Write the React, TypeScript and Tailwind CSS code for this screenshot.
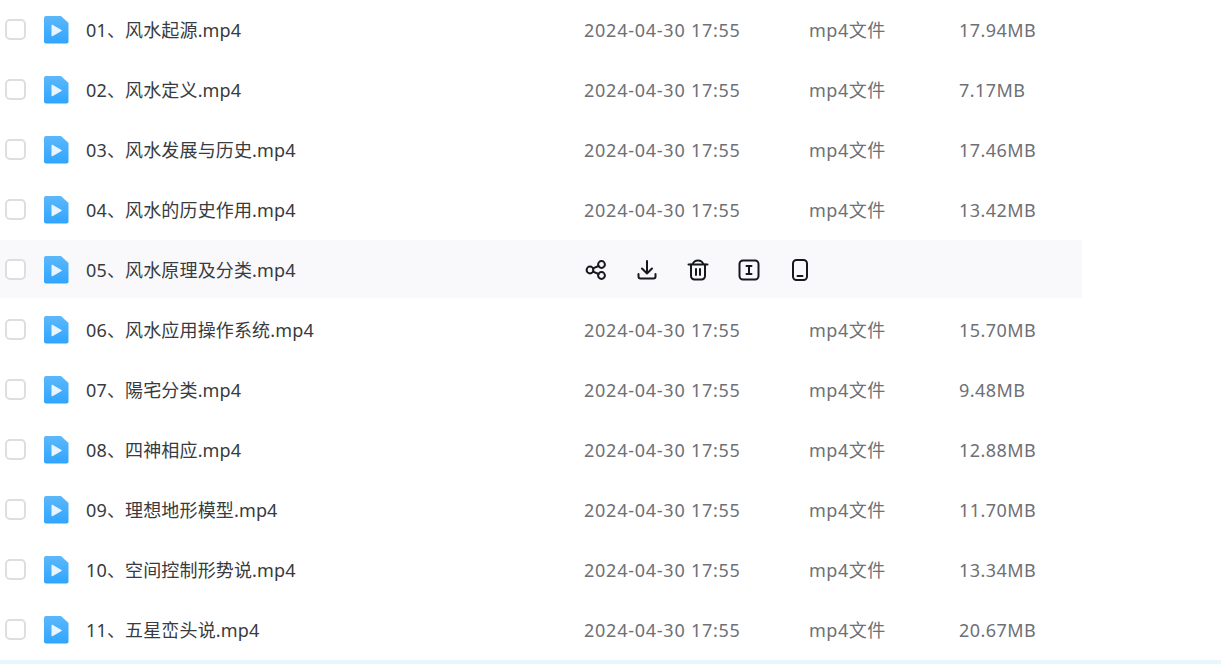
const files = [
  { name: '01、风水起源.mp4', size: '17.94MB' },
  { name: '02、风水定义.mp4', size: '7.17MB' },
  { name: '03、风水发展与历史.mp4', size: '17.46MB' },
  { name: '04、风水的历史作用.mp4', size: '13.42MB' },
  { name: '05、风水原理及分类.mp4', size: '', hover: true },
  { name: '06、风水应用操作系统.mp4', size: '15.70MB' },
  { name: '07、陽宅分类.mp4', size: '9.48MB' },
  { name: '08、四神相应.mp4', size: '12.88MB' },
  { name: '09、理想地形模型.mp4', size: '11.70MB' },
  { name: '10、空间控制形势说.mp4', size: '13.34MB' },
  { name: '11、五星峦头说.mp4', size: '20.67MB' },
];

function VideoIcon() {
  return (
    <svg width="25" height="28" viewBox="0 0 25 28" className="shrink-0">
      <defs>
        <linearGradient id="fileBlue" x1="0" y1="0" x2="0" y2="1">
          <stop offset="0" stopColor="#5cb8fb" />
          <stop offset="1" stopColor="#2fa5ff" />
        </linearGradient>
      </defs>
      <path
        d="M2 0H17L24.5 7V25.5a2 2 0 0 1-2 2H2a2 2 0 0 1-2-2V2a2 2 0 0 1 2-2Z"
        fill="url(#fileBlue)"
      />
      <path d="M8 9L17.5 14.5L8 20Z" fill="#e8f5ff" strokeLinejoin="round" stroke="#e8f5ff" strokeWidth="1" />
    </svg>
  );
}

function ActionIcons() {
  const common = {
    width: 24,
    height: 24,
    viewBox: '0 0 24 24',
    fill: 'none',
    stroke: '#16181d',
    strokeWidth: 2,
    strokeLinecap: 'round' as const,
    strokeLinejoin: 'round' as const,
  };
  return (
    <div className="flex items-center gap-[27px]">
      <svg {...common}>
        <circle cx="6" cy="12" r="3.4" />
        <circle cx="17.5" cy="6.5" r="3.4" />
        <circle cx="17.5" cy="17.5" r="3.4" />
        <path d="M9 10.4L14.6 8M9 13.6L14.6 16" />
      </svg>
      <svg {...common}>
        <path d="M12 3V15.5M7 10.5L12 15.5L17 10.5" />
        <path d="M3.5 16V18.5a2 2 0 0 0 2 2H18.5a2 2 0 0 0 2-2V16" />
      </svg>
      <svg {...common}>
        <path d="M2.5 6.5H21.5M6.5 6.5C7.5 3.5 9.5 2.5 12 2.5S16.5 3.5 17.5 6.5" />
        <path d="M5 6.5V18a3.5 3.5 0 0 0 3.5 3.5h7a3.5 3.5 0 0 0 3.5-3.5V6.5" />
        <path d="M10 11V17M14 11V17" />
      </svg>
      <svg {...common}>
        <rect x="2.5" y="2.5" width="19" height="19" rx="3.5" />
        <path d="M9.5 8H14.5M9.5 16H14.5M12 8V16" />
      </svg>
      <svg {...common}>
        <rect x="5" y="2" width="14" height="20" rx="3.5" />
        <path d="M9.5 18H14.5" />
      </svg>
    </div>
  );
}

export default function App() {
  return (
    <div className="h-[664px] w-[1221px] overflow-hidden bg-white font-['Noto_Sans','Noto_Sans_CJK_SC',sans-serif] text-[18px]">
      {files.map((file) => (
        <div
          key={file.name}
          className={`mb-[2px] flex h-[58px] w-[1082px] items-center pt-[2px] ${file.hover ? 'bg-[#f9f9fc]' : ''}`}
        >
          <div className="mb-[2px] ml-[5px] h-[21px] w-[21px] shrink-0 rounded-[5px] border-2 border-[#dedede] bg-white" />
          <div className="ml-[18px] flex items-center">
            <VideoIcon />
          </div>
          <div className="ml-[17px] w-[498px] shrink-0 tracking-[0.15px] text-[#383b40]">{file.name}</div>
          {file.hover ? (
            <ActionIcons />
          ) : (
            <>
              <div className="w-[225px] shrink-0 tracking-[0.75px] text-[#6d7076]">2024-04-30 17:55</div>
              <div className="w-[150px] shrink-0 tracking-[0.5px] text-[#6d7076]">mp4文件</div>
              <div className="tracking-[0.45px] text-[#6d7076]">{file.size}</div>
            </>
          )}
        </div>
      ))}
      <div className="h-[4px] bg-[#e8f6fe]" />
    </div>
  );
}
